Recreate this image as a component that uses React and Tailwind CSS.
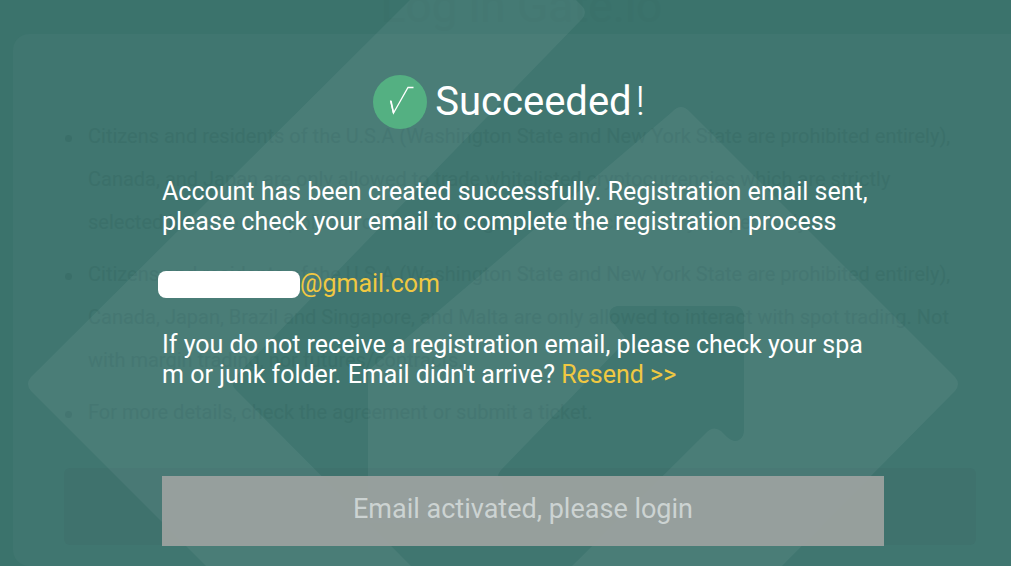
const restrictions = [
  [
    "Citizens and residents of the U.S.A (Washington State and New York State are prohibited entirely),",
    "Canada, and Japan are only allowed to trade whitelisted cryptocurrencies which are strictly",
    "selected based on the policies of the local regulators in each country respectively.",
  ],
  [
    "Citizens and residents of the U.S.A (Washington State and New York State are prohibited entirely),",
    "Canada, Japan, Brazil and Singapore, and Malta are only allowed to interact with spot trading. Not",
    "with margin trading, nor futures/contracts.",
  ],
  ["For more details, check the agreement or submit a ticket."],
];

function Notice() {
  return (
    <div aria-hidden="true" className="absolute inset-0 overflow-hidden bg-[#3b736c] text-[#3b706a]">
      <div className="flex h-[34px] items-end justify-center pl-8 text-[46px] leading-[56px] text-[#3a716a]">
        Log in Gate.io
      </div>
      <div className="ml-[13px] rounded-l-2xl bg-[#407670] pt-[81px] pr-[35px] pb-[21px] pl-[51px]">
        <ul className="flex flex-col gap-[9px] text-[20px] leading-[43px]">
          {restrictions.map((lines, i) => (
            <li key={i} className="flex gap-4">
              <span className="mt-5 ml-[1px] size-[7px] shrink-0 rounded-full bg-[#3a6f69]" />
              <p>
                {lines.map((line) => (
                  <span key={line} className="block whitespace-nowrap">{line}</span>
                ))}
              </p>
            </li>
          ))}
        </ul>
        <div className="mt-[34px] h-[77px] rounded-md bg-[#3f726d]" />
      </div>
    </div>
  );
}

function Watermark() {
  return (
    <svg aria-hidden="true" viewBox="0 0 1011 566" className="absolute inset-0 h-full w-full" fill="#fff" fillOpacity="0.055">
      <path d="M410 0H576L582 6Q588 12 582 19L236 376Q229 384 237 391L411 566H206L31 391Q25 384 31 377Z" />
      <path d="M368 523V374Q368 371 370 369L672 112Q681 102 690 112L955 377Q961 384 955 391L782 566H572L706 433Q713 425 721 431L727 437Q734 443 739 440Q744 437 744 430V317Q744 306 733 306H617Q606 309 611 320L624 336Q626 340 622 345L501 470Q495 477 501 484Q505 490 503 498L490 523Z" />
    </svg>
  );
}

export default function App() {
  return (
    <main className="relative min-h-screen overflow-hidden font-['Roboto','Liberation_Sans',sans-serif] text-white">
      <Notice />
      <Watermark />
      <section className="relative mr-[127px] ml-[162px] pt-[75px] text-[25px] leading-[30px]">
        <h1 className="flex items-center justify-center gap-2 pr-7 text-[40px] leading-[50px]">
          <span className="flex size-[54px] items-center justify-center rounded-full bg-[#54b082]">
            <svg aria-hidden="true" viewBox="0 0 54 54" className="size-full" fill="none" stroke="#fff">
              <path d="M17.500 25.500L20.500 38L35 12.500H40.500" strokeWidth="1.300" />
              <path d="M18 26L20.500 38" strokeWidth="1.500" />
            </svg>
          </span>
          <span>Succeeded<span className="ml-1 font-light">!</span></span>
        </h1>
        <p className="mt-12">
          <span className="block whitespace-nowrap">Account has been created successfully. Registration email sent,</span>
          <span className="block whitespace-nowrap">please check your email to complete the registration process</span>
        </p>
        <p className="mt-8 -ml-1 flex items-center text-[#f0c842]">
          <span className="h-[27px] w-[142px] rounded-lg bg-white" />
          @gmail.com
        </p>
        <p className="mt-[31px]">
          <span className="block whitespace-nowrap">If you do not receive a registration email, please check your spa</span>
          <span className="block whitespace-nowrap">
            m or junk folder. Email didn't arrive? <a href="#resend" className="text-[#f0c842]">Resend &gt;&gt;</a>
          </span>
        </p>
        <button type="button" className="mt-[86px] h-[70px] w-full bg-[#9ba19f]/95 pb-1 text-[27px] text-[#ccd3d2]">
          Email activated, please login
        </button>
      </section>
    </main>
  );
}
